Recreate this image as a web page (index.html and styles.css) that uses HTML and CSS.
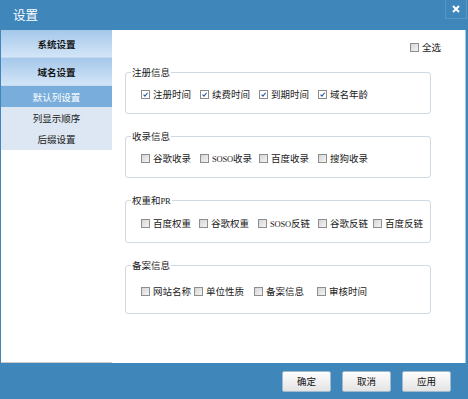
FILE: index.html
```html
<!DOCTYPE html>
<html lang="zh-CN">
<head>
<meta charset="utf-8">
<title>设置</title>
<link rel="stylesheet" href="styles.css">
</head>
<body>
<div class="window">
  <header class="titlebar">
    <span class="title">设置</span>
    <span class="close"><svg width="8" height="8" viewBox="0 0 8 8"><path d="M1 1 L7 7 M7 1 L1 7" stroke="#fff" stroke-width="2" fill="none"/></svg></span>
  </header>
  <div class="main">
    <nav class="side">
      <div class="nav-head">系统设置</div>
      <div class="nav-head">域名设置</div>
      <div class="nav-item active">默认列设置</div>
      <div class="nav-item">列显示顺序</div>
      <div class="nav-item last">后缀设置</div>
    </nav>
    <section class="content">
      <div class="select-all">
        <label class="opt"><span class="cb"></span><span>全选</span></label>
      </div>
      <div class="groups">
        <fieldset class="group">
          <legend>注册信息</legend>
          <div class="row cols-a">
            <label class="opt"><span class="cb checked"><svg viewBox="0 0 9 9"><path d="M2 4.6 L3.8 6.6 L7.2 2.2" stroke="#2556a8" stroke-width="1.4" fill="none"/></svg></span><span>注册时间</span></label>
            <label class="opt"><span class="cb checked"><svg viewBox="0 0 9 9"><path d="M2 4.6 L3.8 6.6 L7.2 2.2" stroke="#2556a8" stroke-width="1.4" fill="none"/></svg></span><span>续费时间</span></label>
            <label class="opt"><span class="cb checked"><svg viewBox="0 0 9 9"><path d="M2 4.6 L3.8 6.6 L7.2 2.2" stroke="#2556a8" stroke-width="1.4" fill="none"/></svg></span><span>到期时间</span></label>
            <label class="opt"><span class="cb checked"><svg viewBox="0 0 9 9"><path d="M2 4.6 L3.8 6.6 L7.2 2.2" stroke="#2556a8" stroke-width="1.4" fill="none"/></svg></span><span>域名年龄</span></label>
          </div>
        </fieldset>
        <fieldset class="group">
          <legend>收录信息</legend>
          <div class="row cols-a">
            <label class="opt"><span class="cb"></span><span>谷歌收录</span></label>
            <label class="opt"><span class="cb"></span><span><span class="latin">SOSO</span>收录</span></label>
            <label class="opt"><span class="cb"></span><span>百度收录</span></label>
            <label class="opt"><span class="cb"></span><span>搜狗收录</span></label>
          </div>
        </fieldset>
        <fieldset class="group">
          <legend>权重和<span class="latin">PR</span></legend>
          <div class="row cols-b">
            <label class="opt"><span class="cb"></span><span>百度权重</span></label>
            <label class="opt"><span class="cb"></span><span>谷歌权重</span></label>
            <label class="opt"><span class="cb"></span><span><span class="latin">SOSO</span>反链</span></label>
            <label class="opt"><span class="cb"></span><span>谷歌反链</span></label>
            <label class="opt"><span class="cb"></span><span>百度反链</span></label>
          </div>
        </fieldset>
        <fieldset class="group tall">
          <legend>备案信息</legend>
          <div class="row cols-c">
            <label class="opt"><span class="cb"></span><span>网站名称</span></label>
            <label class="opt"><span class="cb"></span><span>单位性质</span></label>
            <label class="opt"><span class="cb"></span><span>备案信息</span></label>
            <label class="opt"><span class="cb"></span><span>审核时间</span></label>
          </div>
        </fieldset>
      </div>
    </section>
  </div>
  <footer class="footer">
    <button class="btn">确定</button>
    <button class="btn">取消</button>
    <button class="btn">应用</button>
  </footer>
</div>
</body>
</html>
```
FILE: styles.css
```css
* { box-sizing: border-box; }
html, body { margin: 0; padding: 0; }
body {
  width: 468px;
  height: 399px;
  overflow: hidden;
  background: #3f87bb;
  font-family: "Noto Sans CJK SC", "Noto Sans", sans-serif;
  color: #1a1a1a;
}
.window { width: 468px; height: 399px; display: flex; flex-direction: column; }

.titlebar {
  height: 30px;
  display: flex;
  align-items: center;
  padding-left: 13px;
  flex-shrink: 0;
}
.title { color: #fff; font-size: 12.5px; line-height: 14px; }
.close {
  margin-left: auto;
  align-self: flex-start;
  width: 22px;
  height: 19px;
  margin-right: 1px;
  border: 1px solid rgba(255,255,255,0.13);
  border-top: none;
  display: flex;
  align-items: center;
  justify-content: center;
}

.main {
  height: 333px;
  display: flex;
  margin: 0 2px 0 1px;
  flex-shrink: 0;
}
.side {
  width: 111px;
  flex-shrink: 0;
  background: #fff;
  border-bottom: 1px solid #cbcbcb;
  font-size: 9.5px;
}
.nav-head {
  height: 28px;
  display: flex;
  align-items: center;
  justify-content: center;
  font-weight: bold;
  color: #151515;
  background: linear-gradient(#a5c8ea, #d3e5f7);
  border-bottom: 1px solid #c4dbf0;
}
.nav-item {
  height: 21px;
  display: flex;
  align-items: center;
  justify-content: center;
  background: #dde7f3;
  color: #1a1a1a;
}
.nav-item.active { background: #79aedc; color: #fff; }
.nav-item.last { height: 22px; }

.content {
  flex: 1;
  background: #fff;
  border-right: 1px solid #9cc9ec;
  padding: 11px 0 0 13px;
  font-size: 9.5px;
}
.select-all {
  display: flex;
  justify-content: flex-end;
  padding-right: 24px;
  height: 12px;
}
.opt {
  display: flex;
  align-items: center;
  gap: 3px;
  height: 12px;
  line-height: 12px;
  white-space: nowrap;
}
.cb {
  width: 9px;
  height: 9px;
  flex-shrink: 0;
  border: 1px solid #8e8e8e;
  background: linear-gradient(135deg, #d6d6d6, #f4f4f4);
  display: flex;
}
.cb.checked { background: #fff; border-color: #8a8a8a; }
.cb svg { width: 7px; height: 7px; }
.latin { font-family: "Liberation Serif", serif; font-size: 8.5px; letter-spacing: -0.2px; }

.groups {
  margin-top: 13px;
  display: flex;
  flex-direction: column;
  gap: 16px;
}
.group {
  margin: 0;
  padding: 0;
  width: 306px;
  min-width: 0;
  border: 1px solid #cfdae4;
  border-radius: 3px;
}
.group legend {
  margin-left: 5px;
  padding: 0 1px;
  font-size: 9.5px;
  line-height: 12px;
  color: #1a1a1a;
}
.row {
  display: grid;
  padding: 10px 0 13px 15px;
}
.group.tall .row { padding: 14px 0 16px 15px; }
.cols-a { grid-template-columns: 59px 59px 59px auto; }
.cols-b { grid-template-columns: 58px 59px 60px 55px auto; }
.cols-c { grid-template-columns: 53px 60px 63px auto; }

.footer {
  flex: 1;
  display: flex;
  align-items: center;
  justify-content: flex-end;
  gap: 11px;
  padding-right: 17px;
}
.btn {
  width: 49px;
  height: 21px;
  padding: 0;
  border: 1px solid #a3b9cc;
  border-radius: 2px;
  background: linear-gradient(#fdfdfd, #e4e4e4);
  font-family: "Noto Sans CJK SC", sans-serif;
  font-size: 9.5px;
  color: #111;
}
```
